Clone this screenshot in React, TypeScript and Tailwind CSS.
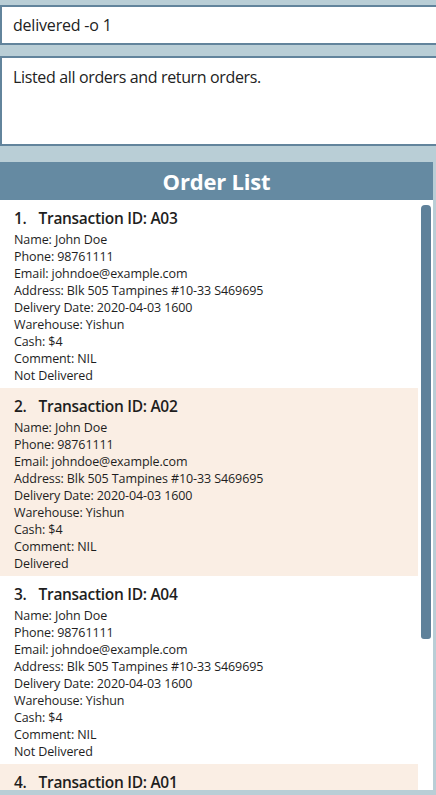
import React from "react";

const orders = [
  { id: "A03", status: "Not Delivered" },
  { id: "A02", status: "Delivered" },
  { id: "A04", status: "Not Delivered" },
  { id: "A01", status: "Not Delivered" },
];

const font = { fontFamily: '"Open Sans", "Noto Sans", sans-serif' };

const OrderCard = ({ idx, id, status }: { idx: number; id: string; status: string }) => {
  const lines = [
    "Name: John Doe",
    "Phone: 98761111",
    "Email: johndoe@example.com",
    "Address: Blk 505 Tampines #10-33 S469695",
    "Delivery Date: 2020-04-03 1600",
    "Warehouse: Yishun",
    "Cash: $4",
    "Comment: NIL",
    status,
  ];
  return (
    <div
      className={`h-[188px] shrink-0 pl-[14px] pt-[8px] text-[#1e1e1e] ${
        idx % 2 === 1 ? "bg-[#faeee4]" : "bg-white"
      }`}
    >
      <div className="flex text-[15.5px] font-semibold leading-[21px] tracking-[-0.3px] h-[23px]">
        <span>{idx + 1}.</span>
        <span className="ml-[12px]">Transaction ID: {id}</span>
      </div>
      <div className="text-[12.5px] leading-[17px] tracking-[-0.1px]">
        {lines.map((l, i) => (
          <div key={i}>{l}</div>
        ))}
      </div>
    </div>
  );
};

const App = () => {
  return (
    <div
      className="h-[795px] w-[436px] overflow-hidden bg-[#b9ced6] pt-[5px] flex flex-col"
      style={font}
    >
      <div className="h-[40px] w-[440px] shrink-0 border-2 border-[#62849c] bg-white pl-[11px] flex items-center text-[16px] text-[#222] tracking-[-0.2px]">
        delivered -o 1
      </div>
      <div className="mt-[11px] h-[90px] w-[440px] shrink-0 border-2 border-[#62849c] bg-white pl-[11px] pt-[7px] text-[16px] text-[#222] tracking-[-0.35px]">
        Listed all orders and return orders.
      </div>
      <div className="mt-[16px] w-[433px] flex-1 flex flex-col mb-[5px] overflow-hidden">
        <div className="h-[38px] shrink-0 bg-[#658aa2] flex items-center justify-center text-white text-[22px] font-bold tracking-[-0.2px]">
          Order List
        </div>
        <div className="relative flex-1 bg-white overflow-hidden">
          <div className="flex flex-col w-[418px]">
            {orders.map((o, i) => (
              <OrderCard key={o.id} idx={i} id={o.id} status={o.status} />
            ))}
          </div>
          <div className="absolute left-[421px] top-[5px] w-[10px] h-[434px] rounded-t-[4px] rounded-b-[3px] bg-[#5f819a]" />
        </div>
      </div>
    </div>
  );
};

export default App;
